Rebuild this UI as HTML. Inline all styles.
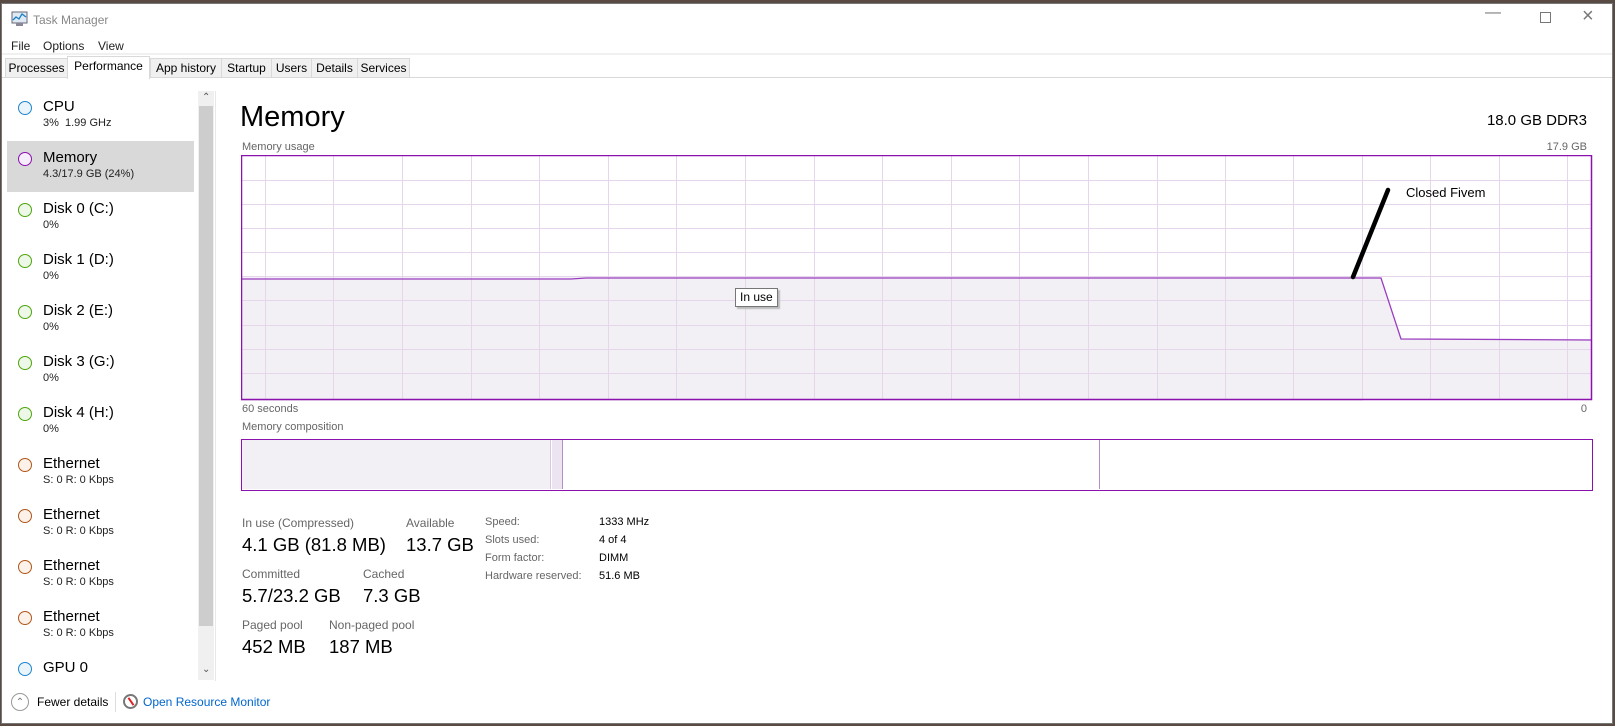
<!DOCTYPE html>
<html><head><meta charset="utf-8"><style>
*{margin:0;padding:0;box-sizing:border-box}
body{width:1615px;height:726px;overflow:hidden;background:#5a4a44;font-family:"Liberation Sans",sans-serif;position:relative}
#win{position:absolute;left:1px;top:3px;width:1612px;height:721px;background:#fff;border:1px solid #777}
.a{position:absolute;white-space:nowrap}
.tab{position:absolute;top:54px;height:20px;border:1px solid #d9d9d9;background:#f0f0f0;font-size:12px;color:#000;text-align:center;line-height:18px}
.nm{font-size:15px;color:#000}
.sb{font-size:11px;color:#222}
.circ{position:absolute;width:14px;height:14px;border-radius:50%;border:1.3px solid}
.lbl{font-size:11px;color:#666}
.val{font-size:18.5px;color:#000}
.sm{font-size:11px;color:#444}
</style></head><body>
<div id="win">
<svg class="a" style="left:9px;top:7px" width="18" height="16"><rect x="1" y="1" width="15" height="11" fill="#dfe9f2" stroke="#667"/><polyline points="2,9 5,6 8,8 11,3 15,6" fill="none" stroke="#1a7fc9" stroke-width="1.3"/><rect x="5" y="12" width="7" height="3" fill="#889"/></svg>
<div class="a" style="left:31px;top:9px;font-size:12px;color:#888">Task Manager</div>
<div class="a" style="left:1483px;top:0;font-size:16px;color:#777">—</div>
<div class="a" style="left:1538px;top:8px;width:11px;height:11px;border:1px solid #777"></div>
<div class="a" style="left:1580px;top:1px;font-size:20px;color:#777;font-weight:100">×</div>
<div class="a" style="left:9px;top:35px;font-size:12px;color:#222">File</div>
<div class="a" style="left:41px;top:35px;font-size:12px;color:#222">Options</div>
<div class="a" style="left:96px;top:35px;font-size:12px;color:#222">View</div>
<div class="a" style="left:0;top:49px;width:1610px;height:2px;background:#f0f0f0"></div>
<div class="a" style="left:0;top:73px;width:1610px;height:1px;background:#d9d9d9"></div>
<div class="tab" style="left:3px;width:63px">Processes</div>
<div class="tab" style="left:65px;width:83px;top:52px;height:23px;background:#fff;border-bottom:none">Performance</div>
<div class="tab" style="left:148px;width:72px">App history</div>
<div class="tab" style="left:219px;width:51px">Startup</div>
<div class="tab" style="left:269px;width:41px">Users</div>
<div class="tab" style="left:309px;width:47px">Details</div>
<div class="tab" style="left:355px;width:53px">Services</div>

<div class="a" style="left:5px;top:137px;width:187px;height:51px;background:#d9d9d9"></div>
<div class="a" style="left:196px;top:87px;width:16px;height:589px;background:#f0f0f0"></div>
<div class="a" style="left:197px;top:102px;width:14px;height:520px;background:#cdcdcd"></div>
<div class="a" style="left:200px;top:88px;font-size:10px;color:#555">&#8963;</div>
<div class="a" style="left:200px;top:660px;font-size:10px;color:#555">&#8964;</div>
<div class="a" style="left:213px;top:87px;width:1px;height:590px;background:#e8e8e8"></div>

<div class="circ" style="left:16px;top:97px;border-color:#1f86cf;background:#eaf4fb"></div>
<div class="a nm" style="left:41px;top:94px">CPU</div><div class="a sb" style="left:41px;top:113px">3%&nbsp; 1.99 GHz</div>
<div class="circ" style="left:16px;top:148px;border-color:#8b12ae;background:#f6eefa"></div>
<div class="a nm" style="left:41px;top:145px">Memory</div><div class="a sb" style="left:41px;top:164px">4.3/17.9 GB (24%)</div>
<div class="circ" style="left:16px;top:199px;border-color:#4da60c;background:#eef8e8"></div>
<div class="a nm" style="left:41px;top:196px">Disk 0 (C:)</div><div class="a sb" style="left:41px;top:215px">0%</div>
<div class="circ" style="left:16px;top:250px;border-color:#4da60c;background:#eef8e8"></div>
<div class="a nm" style="left:41px;top:247px">Disk 1 (D:)</div><div class="a sb" style="left:41px;top:266px">0%</div>
<div class="circ" style="left:16px;top:301px;border-color:#4da60c;background:#eef8e8"></div>
<div class="a nm" style="left:41px;top:298px">Disk 2 (E:)</div><div class="a sb" style="left:41px;top:317px">0%</div>
<div class="circ" style="left:16px;top:352px;border-color:#4da60c;background:#eef8e8"></div>
<div class="a nm" style="left:41px;top:349px">Disk 3 (G:)</div><div class="a sb" style="left:41px;top:368px">0%</div>
<div class="circ" style="left:16px;top:403px;border-color:#4da60c;background:#eef8e8"></div>
<div class="a nm" style="left:41px;top:400px">Disk 4 (H:)</div><div class="a sb" style="left:41px;top:419px">0%</div>
<div class="circ" style="left:16px;top:454px;border-color:#b0561a;background:#fdf2ea"></div>
<div class="a nm" style="left:41px;top:451px">Ethernet</div><div class="a sb" style="left:41px;top:470px">S: 0 R: 0 Kbps</div>
<div class="circ" style="left:16px;top:505px;border-color:#b0561a;background:#fdf2ea"></div>
<div class="a nm" style="left:41px;top:502px">Ethernet</div><div class="a sb" style="left:41px;top:521px">S: 0 R: 0 Kbps</div>
<div class="circ" style="left:16px;top:556px;border-color:#b0561a;background:#fdf2ea"></div>
<div class="a nm" style="left:41px;top:553px">Ethernet</div><div class="a sb" style="left:41px;top:572px">S: 0 R: 0 Kbps</div>
<div class="circ" style="left:16px;top:607px;border-color:#b0561a;background:#fdf2ea"></div>
<div class="a nm" style="left:41px;top:604px">Ethernet</div><div class="a sb" style="left:41px;top:623px">S: 0 R: 0 Kbps</div>
<div class="circ" style="left:16px;top:658px;border-color:#1f86cf;background:#eaf4fb"></div>
<div class="a nm" style="left:41px;top:655px">GPU 0</div>

<div class="a" style="left:9px;top:689px;width:18px;height:18px;border-radius:50%;border:1px solid #999;font-size:10px;color:#777;text-align:center;line-height:18px">&#8963;</div>
<div class="a" style="left:35px;top:691px;font-size:12px;color:#000">Fewer details</div>
<div class="a" style="left:113px;top:688px;width:1px;height:20px;background:#ddd"></div>
<div class="a" style="left:121px;top:690px;width:15px;height:15px;border-radius:50%;border:2px solid #777;background:#fff"><div style="position:absolute;left:5px;top:1px;width:2px;height:9px;background:#d22;transform:rotate(-35deg)"></div></div>
<div class="a" style="left:141px;top:691px;font-size:12px;color:#0066cc">Open Resource Monitor</div>

<div class="a" style="left:238px;top:97px;font-size:29px;color:#000">Memory</div>
<div class="a" style="right:25px;top:108px;font-size:15px;color:#000">18.0 GB DDR3</div>
<div class="a lbl" style="left:240px;top:137px">Memory usage</div>
<div class="a lbl" style="right:25px;top:137px">17.9 GB</div>

<svg class="a" style="left:239px;top:151px" width="1352" height="246">
<rect x="0" y="122" width="1122" height="124" fill="#f2f0f4"/>
<polygon points="1122,122 1140,122 1160,183 1351,184 1351,245 1122,245" fill="#f2f0f4"/>
<g stroke="#e6d6ec" stroke-width="1">
<line x1="1" y1="25.5" x2="1351" y2="25.5"/><line x1="1" y1="49.5" x2="1351" y2="49.5"/><line x1="1" y1="73.5" x2="1351" y2="73.5"/><line x1="1" y1="97.5" x2="1351" y2="97.5"/><line x1="1" y1="121.5" x2="1351" y2="121.5"/><line x1="1" y1="145.5" x2="1351" y2="145.5"/><line x1="1" y1="170.5" x2="1351" y2="170.5"/><line x1="1" y1="194.5" x2="1351" y2="194.5"/><line x1="1" y1="218.5" x2="1351" y2="218.5"/>
<line x1="24.5" y1="1" x2="24.5" y2="245"/><line x1="92.5" y1="1" x2="92.5" y2="245"/><line x1="161.5" y1="1" x2="161.5" y2="245"/><line x1="230.5" y1="1" x2="230.5" y2="245"/><line x1="298.5" y1="1" x2="298.5" y2="245"/><line x1="367.5" y1="1" x2="367.5" y2="245"/><line x1="435.5" y1="1" x2="435.5" y2="245"/><line x1="504.5" y1="1" x2="504.5" y2="245"/><line x1="573.5" y1="1" x2="573.5" y2="245"/><line x1="641.5" y1="1" x2="641.5" y2="245"/><line x1="710.5" y1="1" x2="710.5" y2="245"/><line x1="778.5" y1="1" x2="778.5" y2="245"/><line x1="847.5" y1="1" x2="847.5" y2="245"/><line x1="916.5" y1="1" x2="916.5" y2="245"/><line x1="984.5" y1="1" x2="984.5" y2="245"/><line x1="1052.5" y1="1" x2="1052.5" y2="245"/><line x1="1121.5" y1="1" x2="1121.5" y2="245"/><line x1="1189.5" y1="1" x2="1189.5" y2="245"/><line x1="1258.5" y1="1" x2="1258.5" y2="245"/><line x1="1326.5" y1="1" x2="1326.5" y2="245"/>
</g>
<polyline points="0,124 330,124 345,123 1122,123 1140,123 1160,184 1350,185" fill="none" stroke="#9a3cc0" stroke-width="1.3"/>
<rect x="0.5" y="0.5" width="1350" height="244" fill="none" stroke="#8b12ae" stroke-width="1.5"/>
<line x1="1112" y1="122" x2="1147" y2="35" stroke="#000" stroke-width="4.5" stroke-linecap="round"/>
<text x="1165" y="42" font-family="Liberation Sans" font-size="13" fill="#000">Closed Fivem</text>
</svg>
<div class="a" style="left:733px;top:284px;width:43px;height:19px;border:1px solid #767676;background:#fff;font-size:12px;line-height:17px;padding-left:4px;box-shadow:2px 2px 1px #bbb">In use</div>

<div class="a lbl" style="left:240px;top:399px">60 seconds</div>
<div class="a lbl" style="right:25px;top:399px">0</div>
<div class="a lbl" style="left:240px;top:417px">Memory composition</div>
<div class="a" style="left:239px;top:435px;width:1352px;height:52px;border:1.5px solid #8b12ae;background:#fff">
<div class="a" style="left:0;top:0;width:309px;height:49px;background:#f2f0f4;border-right:1px solid #d8c8e0"></div>
<div class="a" style="left:310px;top:0;width:11px;height:49px;background:#ece4f0;border-right:1px solid #b590c8"></div>
<div class="a" style="left:857px;top:0;width:1px;height:49px;background:#b590c8"></div>
</div>

<div class="a lbl" style="left:240px;top:512px;font-size:12px">In use (Compressed)</div>
<div class="a val" style="left:240px;top:530px">4.1 GB (81.8 MB)</div>
<div class="a lbl" style="left:404px;top:512px;font-size:12px">Available</div>
<div class="a val" style="left:404px;top:530px">13.7 GB</div>
<div class="a lbl" style="left:240px;top:563px;font-size:12px">Committed</div>
<div class="a val" style="left:240px;top:581px">5.7/23.2 GB</div>
<div class="a lbl" style="left:361px;top:563px;font-size:12px">Cached</div>
<div class="a val" style="left:361px;top:581px">7.3 GB</div>
<div class="a lbl" style="left:240px;top:614px;font-size:12px">Paged pool</div>
<div class="a val" style="left:240px;top:632px">452 MB</div>
<div class="a lbl" style="left:327px;top:614px;font-size:12px">Non-paged pool</div>
<div class="a val" style="left:327px;top:632px">187 MB</div>

<div class="a sm" style="left:483px;top:512px;color:#666">Speed:</div><div class="a sm" style="left:597px;top:512px;color:#000">1333 MHz</div>
<div class="a sm" style="left:483px;top:530px;color:#666">Slots used:</div><div class="a sm" style="left:597px;top:530px;color:#000">4 of 4</div>
<div class="a sm" style="left:483px;top:548px;color:#666">Form factor:</div><div class="a sm" style="left:597px;top:548px;color:#000">DIMM</div>
<div class="a sm" style="left:483px;top:566px;color:#666">Hardware reserved:</div><div class="a sm" style="left:597px;top:566px;color:#000">51.6 MB</div>
</div>
</body></html>
